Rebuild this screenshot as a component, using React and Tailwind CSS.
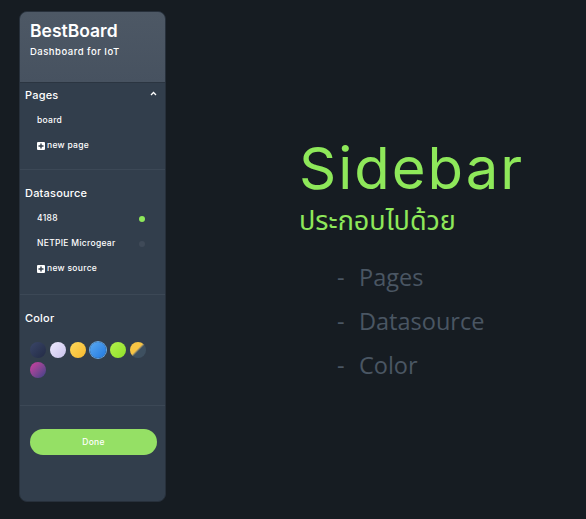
import React from 'react';

const swatches = [
  'bg-gradient-to-br from-[#3a4668] to-[#232b45]',
  'bg-gradient-to-br from-[#eeeaff] to-[#c9c2ea]',
  'bg-gradient-to-br from-[#ffd95a] to-[#f5b82e]',
  'bg-gradient-to-br from-[#5aa9f0] to-[#1f78e0] ring-1 ring-[#6aa6de]',
  'bg-gradient-to-br from-[#b3f04a] to-[#8fe02a]',
  'bg-gradient-to-br from-[#f7c444] from-45% to-[#3e5060] to-55%',
  'bg-gradient-to-br from-[#d23aa0] to-[#3a3f86]',
];

const PlusBox = () => (
  <span className="inline-flex items-center justify-center w-[8px] h-[8px] bg-white rounded-[1px] mr-[2px]">
    <svg width="6" height="6" viewBox="0 0 6 6"><path d="M3 0.5v5M0.5 3h5" stroke="#323e4c" strokeWidth="1.4" /></svg>
  </span>
);

const Row = ({ children, className = '' }) => (
  <div className={`h-[25px] flex items-center ${className}`}>{children}</div>
);

const Sidebar = () => (
  <div className="w-[147px] h-[491px] rounded-[8px] overflow-hidden bg-[#323e4c] border border-[#27303b] flex flex-col text-white" style={{ fontFamily: 'Inter, "Noto Sans", sans-serif' }}>
    <div className="h-[71px] bg-gradient-to-b from-[#4d5865] to-[#475260] px-[10px] pt-[8px] border-b border-[#2b3541]">
      <div className="text-[17.5px] font-semibold leading-[22px]">BestBoard</div>
      <div className="text-[9.5px] font-medium leading-[12px] mt-[4px] tracking-[0.5px]">Dashboard for IoT</div>
    </div>
    <div className="border-b border-[#3c4856] pb-[11px]">
      <Row className="justify-between pl-[5px] pr-[8px]">
        <span className="text-[11px] font-medium tracking-[0.2px]">Pages</span>
        <svg width="7" height="5" viewBox="0 0 7 5" className="-mt-[4px]"><path d="M1 4 L3.5 1.5 L6 4" stroke="#fff" strokeWidth="1.3" fill="none" /></svg>
      </Row>
      <Row className="pl-[17px] text-[8.5px] font-medium tracking-[0.3px]">board</Row>
      <Row className="pl-[17px] text-[8.5px] font-medium tracking-[0.3px]"><PlusBox />new page</Row>
    </div>
    <div className="border-b border-[#3c4856] pt-[11px] pb-[13px]">
      <Row className="pl-[5px] text-[11px] font-medium tracking-[0.2px]">Datasource</Row>
      <Row className="pl-[17px] pr-[20px] justify-between text-[8.5px] font-medium tracking-[0.3px]">
        <span>4188</span>
        <span className="w-[6px] h-[6px] rounded-full bg-[#8ee85a]" />
      </Row>
      <Row className="pl-[17px] pr-[20px] justify-between text-[8.5px] font-medium tracking-[0.3px]">
        <span>NETPIE Microgear</span>
        <span className="w-[6px] h-[6px] rounded-full bg-[#3f4a58]" />
      </Row>
      <Row className="pl-[17px] text-[8.5px] font-medium tracking-[0.3px]"><PlusBox />new source</Row>
    </div>
    <div className="border-b border-[#3c4856] pt-[11px] pb-[27px]">
      <Row className="pl-[5px] text-[11px] font-medium tracking-[0.2px]">Color</Row>
      <div className="px-[10px] mt-[11px] flex flex-wrap gap-x-[4px] gap-y-[4px] w-[145px]">
        {swatches.map((s, i) => (
          <span key={i} className={`w-[16px] h-[16px] rounded-full ${s}`} />
        ))}
      </div>
    </div>
    <div className="px-[10px] pt-[21px]">
      <button className="w-[127px] h-[26px] rounded-full bg-[#95e065] text-white text-[8.5px] font-medium tracking-[0.3px]">Done</button>
    </div>
  </div>
);

export default function App() {
  return (
    <div className="w-[586px] h-[519px] bg-[#161c22] flex overflow-hidden">
      <div className="pl-[19px] pt-[11px]">
        <Sidebar />
      </div>
      <div className="pl-[133px] pt-[133px]">
        <div className="text-[58px] leading-[70px] text-[#8ee85a] font-normal tracking-[2px]" style={{ fontFamily: 'Inter, "Noto Sans", sans-serif' }}>Sidebar</div>
        <div className="text-[27px] leading-[32px] text-[#8ee85a] mt-[3px]" style={{ fontFamily: '"Noto Sans Thai", "Noto Sans", "DejaVu Sans", sans-serif' }}>ประกอบไปด้วย</div>
        <div className="pl-[38px] pt-[17px] text-[23.5px] leading-[44px] text-[#4a5663]" style={{ fontFamily: '"Open Sans", sans-serif' }}>
          <div className="flex"><span className="w-[22px]">-</span>Pages</div>
          <div className="flex"><span className="w-[22px]">-</span>Datasource</div>
          <div className="flex"><span className="w-[22px]">-</span>Color</div>
        </div>
      </div>
    </div>
  );
}
